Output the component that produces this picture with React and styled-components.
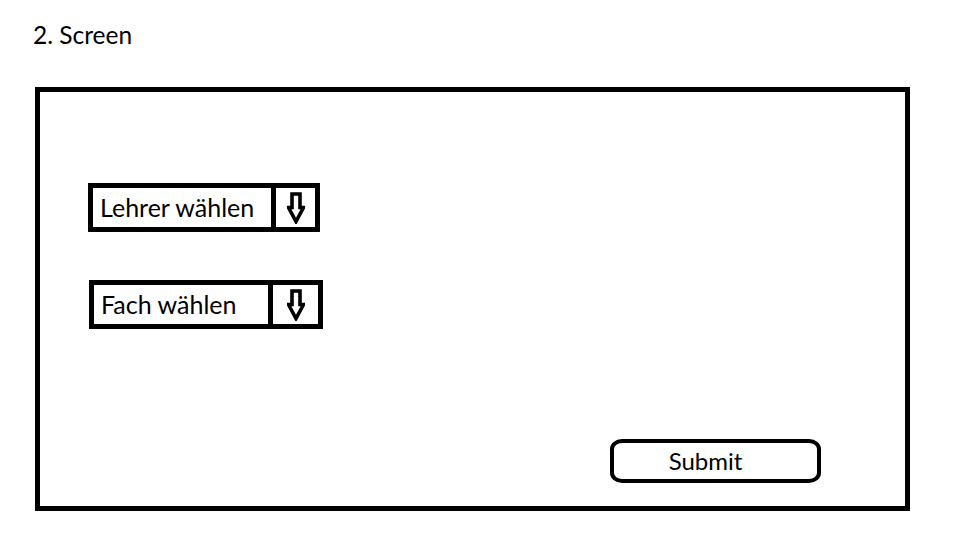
import React from 'react';
import styled, { createGlobalStyle } from 'styled-components';

const GlobalStyle = createGlobalStyle`
  html, body {
    margin: 0;
    padding: 0;
    background: #ffffff;
  }
  body {
    font-family: 'Lato', 'Open Sans', sans-serif;
    color: #000000;
  }
`;

const Page = styled.div`
  width: 960px;
  height: 540px;
  display: flex;
  flex-direction: column;
  box-sizing: border-box;
  padding: 18px 0 0 35px;
`;

const Title = styled.h1`
  margin: 0 0 0 -2px;
  height: 69px;
  font-size: 24.5px;
  font-weight: 400;
  line-height: 34px;
`;

const Frame = styled.div`
  box-sizing: border-box;
  width: 875px;
  height: 424px;
  border: 5px solid #000000;
  display: flex;
  flex-direction: column;
  padding: 91px 84px 23px 48px;
`;

const Fields = styled.div`
  display: flex;
  flex-direction: column;
  align-items: flex-start;
  gap: 48px;
`;

const Select = styled.div`
  display: flex;
  height: 49px;
  box-sizing: border-box;
  border: 5px solid #000000;
  margin-left: ${(p) => p.$shift || 0}px;
`;

const Label = styled.div`
  width: ${(p) => p.$width}px;
  box-sizing: border-box;
  padding-left: 7px;
  display: flex;
  align-items: center;
  font-size: 25px;
  line-height: 1;
  white-space: nowrap;
`;

const ArrowCell = styled.div`
  width: ${(p) => p.$width}px;
  border-left: 5px solid #000000;
  display: flex;
  align-items: center;
  justify-content: center;
`;

const Footer = styled.div`
  margin-top: auto;
  display: flex;
  justify-content: flex-end;
`;

const SubmitButton = styled.button`
  width: 211px;
  height: 44px;
  box-sizing: border-box;
  border: 4px solid #000000;
  border-radius: 12px / 10px;
  background: #ffffff;
  font-family: 'Lato', 'Open Sans', sans-serif;
  font-size: 24px;
  color: #000000;
  padding: 0 20px 2px 0;
`;

const DownArrow = () => (
  <svg width="18" height="32" viewBox="0 0 18 32">
    <polygon
      points="5,2 13,2 13,15.5 16.5,15.5 9,29.5 1.5,15.5 5,15.5"
      fill="none"
      stroke="#000000"
      strokeWidth="3.6"
      strokeLinejoin="miter"
    />
  </svg>
);

const fields = [
  { label: 'Lehrer wählen', labelWidth: 178, arrowWidth: 39, shift: 0 },
  { label: 'Fach wählen', labelWidth: 174, arrowWidth: 45, shift: 1 },
];

export default function App() {
  return (
    <>
      <GlobalStyle />
      <Page>
        <Title>2. Screen</Title>
        <Frame>
          <Fields>
            {fields.map((f) => (
              <Select key={f.label} $shift={f.shift}>
                <Label $width={f.labelWidth}>{f.label}</Label>
                <ArrowCell $width={f.arrowWidth}>
                  <DownArrow />
                </ArrowCell>
              </Select>
            ))}
          </Fields>
          <Footer>
            <SubmitButton type="button">Submit</SubmitButton>
          </Footer>
        </Frame>
      </Page>
    </>
  );
}
